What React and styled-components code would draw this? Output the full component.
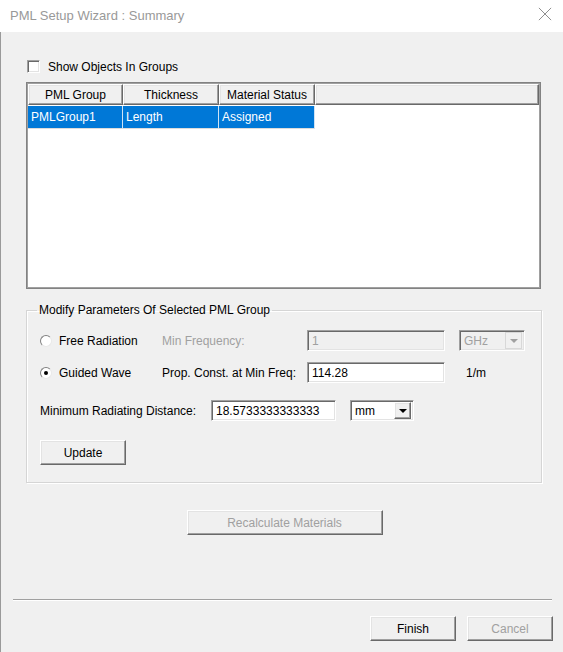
import React from "react";
import styled, { createGlobalStyle, css } from "styled-components";

const GlobalStyle = createGlobalStyle`
  html, body {
    margin: 0;
    padding: 0;
    background: #f0f0f0;
  }
  body {
    font-family: "Liberation Sans", Arial, sans-serif;
    font-size: 12px;
    color: #000;
  }
`;

const raised = css`
  border-style: solid;
  border-width: 1px;
  border-color: #fff #696969 #696969 #fff;
  box-shadow: inset -1px -1px 0 #a0a0a0, inset 1px 1px 0 #e3e3e3;
`;

const sunken = css`
  border-style: solid;
  border-width: 1px;
  border-color: #a0a0a0 #fff #fff #a0a0a0;
  box-shadow: inset 1px 1px 0 #696969, inset -1px -1px 0 #e3e3e3;
`;

export default function App() {
  return (
    <>
      <GlobalStyle />
      <Window>
        <TitleBar>
          <Title>PML Setup Wizard : Summary</Title>
          <CloseIcon viewBox="0 0 16 16">
            <path d="M1 1 L15 15 M15 1 L1 15" stroke="#8a8a8a" strokeWidth="1.1" fill="none" />
          </CloseIcon>
        </TitleBar>

        <Body>
          <Content>
            <CheckRow>
              <CheckBox />
              <span>Show Objects In Groups</span>
            </CheckRow>

            <ListView>
              <HeaderRow>
                <HeaderCell $w={95}>PML Group</HeaderCell>
                <HeaderCell $w={96}>Thickness</HeaderCell>
                <HeaderCell $w={96}>Material Status</HeaderCell>
                <HeaderCell $fill />
              </HeaderRow>
              <DataRow>
                <DataCell $w={95}>PMLGroup1</DataCell>
                <DataCell $w={96}>Length</DataCell>
                <DataCell $w={96}>Assigned</DataCell>
              </DataRow>
            </ListView>

            <GroupBox>
              <Legend>Modify Parameters Of Selected PML Group</Legend>
              <ParamGrid>
                <RadioLabel>
                  <Radio />
                  Free Radiation
                </RadioLabel>
                <FieldLabel $disabled>Min Frequency:</FieldLabel>
                <TextBox $w={138} $disabled>1</TextBox>
                <Combo $w={66} $disabled>
                  <span>GHz</span>
                  <ComboButton $disabled>
                    <Arrow $disabled />
                  </ComboButton>
                </Combo>

                <RadioLabel>
                  <Radio $checked />
                  Guided Wave
                </RadioLabel>
                <FieldLabel>Prop. Const. at Min Freq:</FieldLabel>
                <TextBox $w={138}>114.28</TextBox>
                <Unit>1/m</Unit>
              </ParamGrid>

              <DistanceRow>
                <DistanceLabel>Minimum Radiating Distance:</DistanceLabel>
                <TextBox $w={125}>18.5733333333333</TextBox>
                <Combo $w={64}>
                  <span>mm</span>
                  <ComboButton>
                    <Arrow />
                  </ComboButton>
                </Combo>
              </DistanceRow>

              <Button>Update</Button>
            </GroupBox>

            <RecalcRow>
              <Button $w={196} $disabled>
                Recalculate Materials
              </Button>
            </RecalcRow>
          </Content>

          <Separator />
          <Footer>
            <Button>Finish</Button>
            <Button $disabled>Cancel</Button>
          </Footer>
        </Body>
      </Window>
    </>
  );
}

const Window = styled.div`
  width: 563px;
  height: 652px;
  display: flex;
  flex-direction: column;
  background: #f0f0f0;
  overflow: hidden;
`;

const TitleBar = styled.div`
  height: 32px;
  flex: none;
  background: #fff;
  display: flex;
  align-items: center;
  justify-content: space-between;
  padding: 0 11px 0 10px;
`;

const Title = styled.div`
  font-size: 13px;
  color: #999;
  margin-top: -2px;
`;

const CloseIcon = styled.svg`
  width: 14px;
  height: 14px;
  margin-top: -4px;
`;

const Body = styled.div`
  flex: 1;
  display: flex;
  flex-direction: column;
  border-left: 1px solid #9a9a9a;
`;

const Content = styled.div`
  flex: 1;
  padding: 28px 22px 0 25px;
  display: flex;
  flex-direction: column;
`;

const CheckRow = styled.label`
  display: flex;
  align-items: center;
  gap: 8px;
  margin-left: 1px;
  height: 13px;
`;

const CheckBox = styled.span`
  width: 11px;
  height: 11px;
  background: #fff;
  ${sunken};
`;

const ListView = styled.div`
  margin-top: 9px;
  height: 203px;
  background: #fff;
  border: 1px solid #828282;
  box-shadow: inset 1px 1px 0 #a0a0a0, inset -1px -1px 0 #a0a0a0;
  padding: 1px;
`;

const HeaderRow = styled.div`
  display: flex;
  height: 21px;
`;

const HeaderCell = styled.div`
  box-sizing: border-box;
  width: ${(p) => (p.$fill ? "auto" : `${p.$w}px`)};
  flex: ${(p) => (p.$fill ? 1 : "none")};
  background: #f0f0f0;
  ${raised};
  display: flex;
  align-items: center;
  justify-content: center;
`;

const DataRow = styled.div`
  display: flex;
  height: 23px;
  margin-top: 1px;
`;

const DataCell = styled.div`
  box-sizing: border-box;
  width: ${(p) => p.$w}px;
  background: #0078d7;
  color: #fff;
  border-right: 1px solid #cfe3f5;
  border-bottom: 1px solid #dcdcdc;
  padding-left: 3px;
  display: flex;
  align-items: center;
`;

const GroupBox = styled.fieldset`
  margin: 14px 0 0;
  padding: 13px 13px 17px;
  border: 1px solid #d5d5d5;
  box-shadow: inset 1px 1px 0 #fff, 1px 1px 0 #fff;
  border-radius: 0;
  width: 516px;
  box-sizing: border-box;
`;

const Legend = styled.legend`
  padding: 0 2px;
  margin-left: -3px;
`;

const ParamGrid = styled.div`
  display: grid;
  grid-template-columns: 122px 145px 152px 66px;
  grid-auto-rows: 21px;
  row-gap: 11px;
  align-items: center;
`;

const RadioLabel = styled.label`
  display: flex;
  align-items: center;
  gap: 7px;
`;

const Radio = styled.span`
  width: 12px;
  height: 12px;
  box-sizing: border-box;
  border-radius: 50%;
  background: #fff;
  border: 1px solid;
  border-color: #808080 #e8e8e8 #e8e8e8 #808080;
  position: relative;

  &::after {
    content: "";
    display: ${(p) => (p.$checked ? "block" : "none")};
    position: absolute;
    left: 3px;
    top: 3px;
    width: 4px;
    height: 4px;
    border-radius: 50%;
    background: #000;
  }
`;

const FieldLabel = styled.span`
  color: ${(p) => (p.$disabled ? "#a0a0a0" : "#000")};
`;

const TextBox = styled.div`
  box-sizing: border-box;
  width: ${(p) => p.$w}px;
  height: 21px;
  ${sunken};
  background: ${(p) => (p.$disabled ? "#f0f0f0" : "#fff")};
  color: ${(p) => (p.$disabled ? "#a0a0a0" : "#000")};
  padding-left: 4px;
  display: flex;
  align-items: center;
`;

const Combo = styled.div`
  box-sizing: border-box;
  width: ${(p) => p.$w}px;
  height: 21px;
  ${sunken};
  background: ${(p) => (p.$disabled ? "#f0f0f0" : "#fff")};
  color: ${(p) => (p.$disabled ? "#a0a0a0" : "#000")};
  display: flex;
  align-items: center;
  justify-content: space-between;
  padding: 2px 2px 2px 4px;
`;

const ComboButton = styled.span`
  box-sizing: border-box;
  width: 17px;
  height: 17px;
  background: #f0f0f0;
  ${(p) =>
    p.$disabled
      ? css`
          border: 1px solid #d8d8d8;
        `
      : raised};
  display: flex;
  align-items: center;
  justify-content: center;
`;

const Arrow = styled.span`
  width: 0;
  height: 0;
  border-left: 4px solid transparent;
  border-right: 4px solid transparent;
  border-top: 4px solid ${(p) => (p.$disabled ? "#a0a0a0" : "#000")};
`;

const Unit = styled.span`
  padding-left: 7px;
`;

const DistanceRow = styled.div`
  display: flex;
  align-items: center;
  gap: 14px;
  margin-top: 17px;
  height: 21px;
`;

const DistanceLabel = styled.span`
  width: 157px;
`;

const Button = styled.button`
  box-sizing: border-box;
  width: ${(p) => p.$w || 86}px;
  height: 25px;
  margin-top: 0;
  font: inherit;
  background: #f0f0f0;
  color: ${(p) => (p.$disabled ? "#a0a0a0" : "#000")};
  ${raised};
  padding: 0;
  cursor: default;

  ${DistanceRow} + & {
    margin-top: 19px;
  }
`;

const RecalcRow = styled.div`
  display: flex;
  justify-content: center;
  margin-top: 27px;
  padding-left: 2px;
`;

const Separator = styled.div`
  height: 0;
  margin: 0 11px 0 12px;
  border-top: 1px solid #a0a0a0;
  border-bottom: 1px solid #fff;
`;

const Footer = styled.div`
  display: flex;
  justify-content: flex-end;
  gap: 11px;
  padding: 15px 10px 11px;
`;
